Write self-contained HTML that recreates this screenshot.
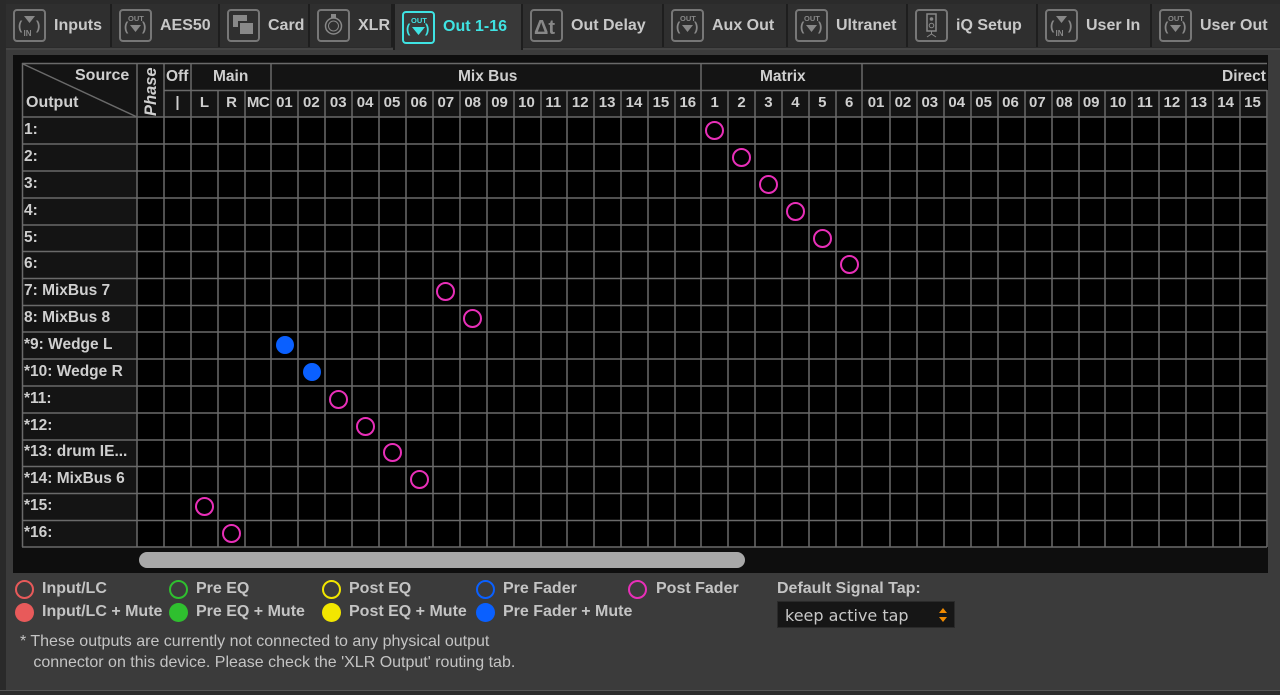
<!DOCTYPE html>
<html><head><meta charset="utf-8"><style>
*{margin:0;padding:0;box-sizing:border-box}
body{width:1280px;height:695px;overflow:hidden;background:#3b3b3b;font-family:"Liberation Sans",sans-serif;position:relative;color:#cfcfcf}
.abs{position:absolute}
#lstrip{left:0;top:0;width:6px;height:695px;background:#2a2a2a}
#bar{left:6px;top:0;width:1274px;height:50px;background:#2b2b2b;border-bottom:2px solid #444}
.tab{position:absolute;top:4px;height:43px;background:#2f2f2f;border-right:2px solid #1e1e1e;display:flex;align-items:center;padding-left:7px;font-weight:bold;font-size:16px;color:#c8c8c8}
.tab.act{background:#393939;top:4px;height:46px;color:#3fe3e3;border-left:2px solid #1e1e1e}
.ic{width:33px;height:33px;border:2px solid #777;border-radius:4px;margin-right:8px;position:relative;flex:none}
.act .ic{border-color:#3fe3e3}
.ic svg{position:absolute;left:0;top:0}
#panel{left:13px;top:55px;width:1255px;height:518px;background:#0e0e0e}
.t{position:absolute;font-weight:bold;font-size:15.5px;color:#cfcfcf;white-space:nowrap}
.hn{font-size:15px}
.ring{position:absolute;width:19px;height:19px;border:2.5px solid #e82fb8;border-radius:50%}
.dot{position:absolute;width:18px;height:18px;background:#0a60ff;border-radius:50%}
.lg{position:absolute;font-weight:bold;font-size:16px;color:#c4c4c4;white-space:nowrap}
.lr{position:absolute;width:19px;height:19px;border:2.5px solid;border-radius:50%}
.lf{position:absolute;width:19px;height:19px;border-radius:50%}
</style></head><body>
<div class="abs" id="lstrip"></div>
<div class="abs" id="bar"></div>

<div class="tab" style="left:6px;width:106px"><div class="ic"><svg width="29" height="29"><text x="3" y="19" fill="#888" font-size="13" font-family="Liberation Sans">(</text><text x="21" y="19" fill="#888" font-size="13" font-family="Liberation Sans">)</text><path d="M9 5h11l-5.5 7z" fill="#888"/><text x="8.5" y="25" fill="#888" font-size="8" font-family="Liberation Sans">IN</text></svg></div>Inputs</div>
<div class="tab" style="left:112px;width:108px"><div class="ic"><svg width="29" height="29"><text x="3" y="20" fill="#888" font-size="13" font-family="Liberation Sans">(</text><text x="21" y="20" fill="#888" font-size="13" font-family="Liberation Sans">)</text><text x="7" y="10" fill="#888" font-size="7.5" font-family="Liberation Sans">OUT</text><path d="M9 14h11l-5.5 7z" fill="#888"/></svg></div>AES50</div>
<div class="tab" style="left:220px;width:90px"><div class="ic"><svg width="29" height="29"><rect x="4" y="4" width="14" height="12" fill="#888"/><rect x="10" y="11" width="15" height="13" fill="#888" stroke="#2f2f2f" stroke-width="2"/></svg></div>Card</div>
<div class="tab" style="left:310px;width:83px"><div class="ic"><svg width="29" height="29"><circle cx="14.5" cy="15" r="8" fill="none" stroke="#888" stroke-width="1.5"/><circle cx="14.5" cy="15" r="5" fill="none" stroke="#888"/><rect x="12" y="3" width="5" height="4" fill="#888"/></svg></div>XLR</div>
<div class="tab act" style="left:393px;width:130px"><div class="ic"><svg width="29" height="29"><text x="2" y="20" fill="#3fe3e3" font-size="13" font-family="Liberation Sans">(</text><text x="21" y="20" fill="#3fe3e3" font-size="13" font-family="Liberation Sans">)</text><text x="7" y="10" fill="#3fe3e3" font-size="7.5" font-family="Liberation Sans">OUT</text><path d="M8 14h13l-6.5 8z" fill="#3fe3e3"/></svg></div>Out 1-16</div>
<div class="tab" style="left:523px;width:141px"><div class="ic"><svg width="29" height="29"><text x="2" y="23" fill="#888" font-size="20" font-family="Liberation Sans">Δt</text></svg></div>Out Delay</div>
<div class="tab" style="left:664px;width:124px"><div class="ic"><svg width="29" height="29"><text x="3" y="20" fill="#888" font-size="13" font-family="Liberation Sans">(</text><text x="21" y="20" fill="#888" font-size="13" font-family="Liberation Sans">)</text><text x="7" y="10" fill="#888" font-size="7.5" font-family="Liberation Sans">OUT</text><path d="M9 14h11l-5.5 7z" fill="#888"/></svg></div>Aux Out</div>
<div class="tab" style="left:788px;width:120px"><div class="ic"><svg width="29" height="29"><text x="3" y="20" fill="#888" font-size="13" font-family="Liberation Sans">(</text><text x="21" y="20" fill="#888" font-size="13" font-family="Liberation Sans">)</text><text x="7" y="10" fill="#888" font-size="7.5" font-family="Liberation Sans">OUT</text><path d="M9 14h11l-5.5 7z" fill="#888"/></svg></div>Ultranet</div>
<div class="tab" style="left:908px;width:130px"><div class="ic"><svg width="29" height="29"><rect x="10" y="3" width="9" height="17" fill="none" stroke="#888" stroke-width="1.5"/><circle cx="14.5" cy="8" r="1.8" fill="#888"/><circle cx="14.5" cy="14.5" r="2.3" fill="none" stroke="#888"/><path d="M14.5 20v3M10 26l4.5-3 4.5 3" stroke="#888" fill="none"/></svg></div>iQ Setup</div>
<div class="tab" style="left:1038px;width:114px"><div class="ic"><svg width="29" height="29"><text x="3" y="19" fill="#888" font-size="13" font-family="Liberation Sans">(</text><text x="21" y="19" fill="#888" font-size="13" font-family="Liberation Sans">)</text><path d="M9 5h11l-5.5 7z" fill="#888"/><text x="8.5" y="25" fill="#888" font-size="8" font-family="Liberation Sans">IN</text></svg></div>User In</div>
<div class="tab" style="left:1152px;width:128px;border-right:none"><div class="ic"><svg width="29" height="29"><text x="3" y="20" fill="#888" font-size="13" font-family="Liberation Sans">(</text><text x="21" y="20" fill="#888" font-size="13" font-family="Liberation Sans">)</text><text x="7" y="10" fill="#888" font-size="7.5" font-family="Liberation Sans">OUT</text><path d="M9 14h11l-5.5 7z" fill="#888"/></svg></div>User Out</div>

<div class="abs" id="panel"></div>

<svg class="abs" style="left:0;top:0" width="1280" height="575">
<rect x="22" y="63" width="1245" height="54" fill="#141414"/>
<rect x="22" y="117" width="115" height="430" fill="#141414"/>
<rect x="137" y="117" width="1130" height="430" fill="#000"/>
<g stroke="#6a6a6a" stroke-width="1.5" fill="none">
<path d="M22 63.5H1267M164 90.5H1267M22 117H1267"/>
<path d="M22 144H1267M22 171H1267M22 198H1267M22 225H1267M22 251.5H1267M22 278.5H1267M22 305.5H1267M22 332H1267M22 359H1267M22 386H1267M22 413H1267M22 440H1267M22 466.5H1267M22 493.5H1267M22 520.5H1267M22 547H1267"/>
<path d="M22.5 63V547M137 63V547M164 63V547M191 63V547M271 63V547M701 63V547M862 63V547"/>
<path d="M218 90V547M245 90V547M298 90V547M325 90V547M352 90V547M379 90V547M406 90V547M433 90V547M460 90V547M487 90V547M514 90V547M541 90V547M567 90V547M594 90V547M621 90V547M648 90V547M675 90V547M728 90V547M755 90V547M782 90V547M809 90V547M836 90V547M890 90V547M917 90V547M944 90V547M971 90V547M998 90V547M1025 90V547M1052 90V547M1079 90V547M1105 90V547M1132 90V547M1159 90V547M1186 90V547M1213 90V547M1240 90V547M1267 90V547"/>
<path d="M23 64L137 117"/>
</g>
<rect x="139" y="552" width="606" height="16" rx="8" fill="#a8a8a8"/>
</svg>

<div class="t" style="left:75px;top:67px;font-size:16px">Source</div>
<div class="t" style="left:26px;top:94px;font-size:16px">Output</div>
<div class="t" style="left:142px;top:116px;transform:rotate(-90deg);transform-origin:0 0;font-style:italic;font-size:16.5px">Phase</div>
<div class="t" style="left:166px;top:68px">Off</div>
<div class="t" style="left:213px;top:68px">Main</div>
<div class="t" style="left:458px;top:68px">Mix Bus</div>
<div class="t" style="left:760px;top:68px">Matrix</div>
<div class="t" style="left:1222px;top:68px">Direct</div>

<div class="abs" style="left:164px;top:94px;display:flex;font-weight:bold;font-size:15px;color:#cfcfcf">
<span style="width:27px;text-align:center">|</span><span style="width:27px;text-align:center">L</span><span style="width:27px;text-align:center">R</span><span style="width:26px;text-align:center;letter-spacing:-0.5px">MC</span>
</div>
<div class="abs" style="left:271px;top:94px;display:flex;font-weight:bold;font-size:15px;color:#cfcfcf">
<span style="width:26.9px;text-align:center">01</span><span style="width:26.9px;text-align:center">02</span><span style="width:26.9px;text-align:center">03</span><span style="width:26.9px;text-align:center">04</span><span style="width:26.9px;text-align:center">05</span><span style="width:26.9px;text-align:center">06</span><span style="width:26.9px;text-align:center">07</span><span style="width:26.9px;text-align:center">08</span><span style="width:26.9px;text-align:center">09</span><span style="width:26.9px;text-align:center">10</span><span style="width:26.9px;text-align:center">11</span><span style="width:26.9px;text-align:center">12</span><span style="width:26.9px;text-align:center">13</span><span style="width:26.9px;text-align:center">14</span><span style="width:26.9px;text-align:center">15</span><span style="width:26.9px;text-align:center">16</span>
<span style="width:26.9px;text-align:center">1</span><span style="width:26.9px;text-align:center">2</span><span style="width:26.9px;text-align:center">3</span><span style="width:26.9px;text-align:center">4</span><span style="width:26.9px;text-align:center">5</span><span style="width:26.9px;text-align:center">6</span>
<span style="width:26.9px;text-align:center">01</span><span style="width:26.9px;text-align:center">02</span><span style="width:26.9px;text-align:center">03</span><span style="width:26.9px;text-align:center">04</span><span style="width:26.9px;text-align:center">05</span><span style="width:26.9px;text-align:center">06</span><span style="width:26.9px;text-align:center">07</span><span style="width:26.9px;text-align:center">08</span><span style="width:26.9px;text-align:center">09</span><span style="width:26.9px;text-align:center">10</span><span style="width:26.9px;text-align:center">11</span><span style="width:26.9px;text-align:center">12</span><span style="width:26.9px;text-align:center">13</span><span style="width:26.9px;text-align:center">14</span><span style="width:26.9px;text-align:center">15</span>
</div>

<div class="t" style="left:24px;top:121px">1:</div>
<div class="t" style="left:24px;top:148px">2:</div>
<div class="t" style="left:24px;top:175px">3:</div>
<div class="t" style="left:24px;top:202px">4:</div>
<div class="t" style="left:24px;top:229px">5:</div>
<div class="t" style="left:24px;top:255px">6:</div>
<div class="t" style="left:24px;top:282px">7: MixBus 7</div>
<div class="t" style="left:24px;top:309px">8: MixBus 8</div>
<div class="t" style="left:24px;top:336px">*9: Wedge L</div>
<div class="t" style="left:24px;top:363px">*10: Wedge R</div>
<div class="t" style="left:24px;top:390px">*11:</div>
<div class="t" style="left:24px;top:417px">*12:</div>
<div class="t" style="left:24px;top:443px">*13: drum IE...</div>
<div class="t" style="left:24px;top:470px">*14: MixBus 6</div>
<div class="t" style="left:24px;top:497px">*15:</div>
<div class="t" style="left:24px;top:524px">*16:</div>

<div class="ring" style="left:705px;top:121px"></div>
<div class="ring" style="left:732px;top:148px"></div>
<div class="ring" style="left:759px;top:175px"></div>
<div class="ring" style="left:786px;top:202px"></div>
<div class="ring" style="left:813px;top:229px"></div>
<div class="ring" style="left:840px;top:255px"></div>
<div class="ring" style="left:436px;top:282px"></div>
<div class="ring" style="left:463px;top:309px"></div>
<div class="dot" style="left:276px;top:336px"></div>
<div class="dot" style="left:303px;top:363px"></div>
<div class="ring" style="left:329px;top:390px"></div>
<div class="ring" style="left:356px;top:417px"></div>
<div class="ring" style="left:383px;top:443px"></div>
<div class="ring" style="left:410px;top:470px"></div>
<div class="ring" style="left:195px;top:497px"></div>
<div class="ring" style="left:222px;top:524px"></div>

<div class="lr" style="left:15px;top:580px;border-color:#e85a5a"></div><div class="lg" style="left:42px;top:580px">Input/LC</div>
<div class="lf" style="left:15px;top:603px;background:#e85a5a"></div><div class="lg" style="left:42px;top:603px">Input/LC + Mute</div>
<div class="lr" style="left:169px;top:580px;border-color:#2fbf2f"></div><div class="lg" style="left:196px;top:580px">Pre EQ</div>
<div class="lf" style="left:169px;top:603px;background:#2fbf2f"></div><div class="lg" style="left:196px;top:603px">Pre EQ + Mute</div>
<div class="lr" style="left:322px;top:580px;border-color:#f2e600"></div><div class="lg" style="left:349px;top:580px">Post EQ</div>
<div class="lf" style="left:322px;top:603px;background:#f2e600"></div><div class="lg" style="left:349px;top:603px">Post EQ + Mute</div>
<div class="lr" style="left:476px;top:580px;border-color:#0a60ff"></div><div class="lg" style="left:503px;top:580px">Pre Fader</div>
<div class="lf" style="left:476px;top:603px;background:#0a60ff"></div><div class="lg" style="left:503px;top:603px">Pre Fader + Mute</div>
<div class="lr" style="left:628px;top:580px;border-color:#e82fb8"></div><div class="lg" style="left:656px;top:580px">Post Fader</div>
<div class="lg" style="left:777px;top:580px">Default Signal Tap:</div>
<div class="abs" style="left:777px;top:601px;width:178px;height:27px;background:#161616;border:1px solid #2a2a2a;font-size:16px;color:#c8c8c8;padding:4px 0 0 7px;font-family:'DejaVu Sans',sans-serif">keep active tap
<svg class="abs" style="left:160px;top:6px" width="10" height="14"><path d="M5 0l4 5H1z M5 14l4-5H1z" fill="#f08a00"/></svg></div>
<div class="abs" style="left:20px;top:631px;font-size:16px;color:#c4c4c4;line-height:21px">* These outputs are currently not connected to any physical output<br>&nbsp;&nbsp;&nbsp;connector on this device. Please check the 'XLR Output' routing tab.</div>
<div class="abs" style="left:0;top:690px;width:1280px;height:5px;background:#2c2c2c;border-top:1px solid #555"></div>
</body></html>
